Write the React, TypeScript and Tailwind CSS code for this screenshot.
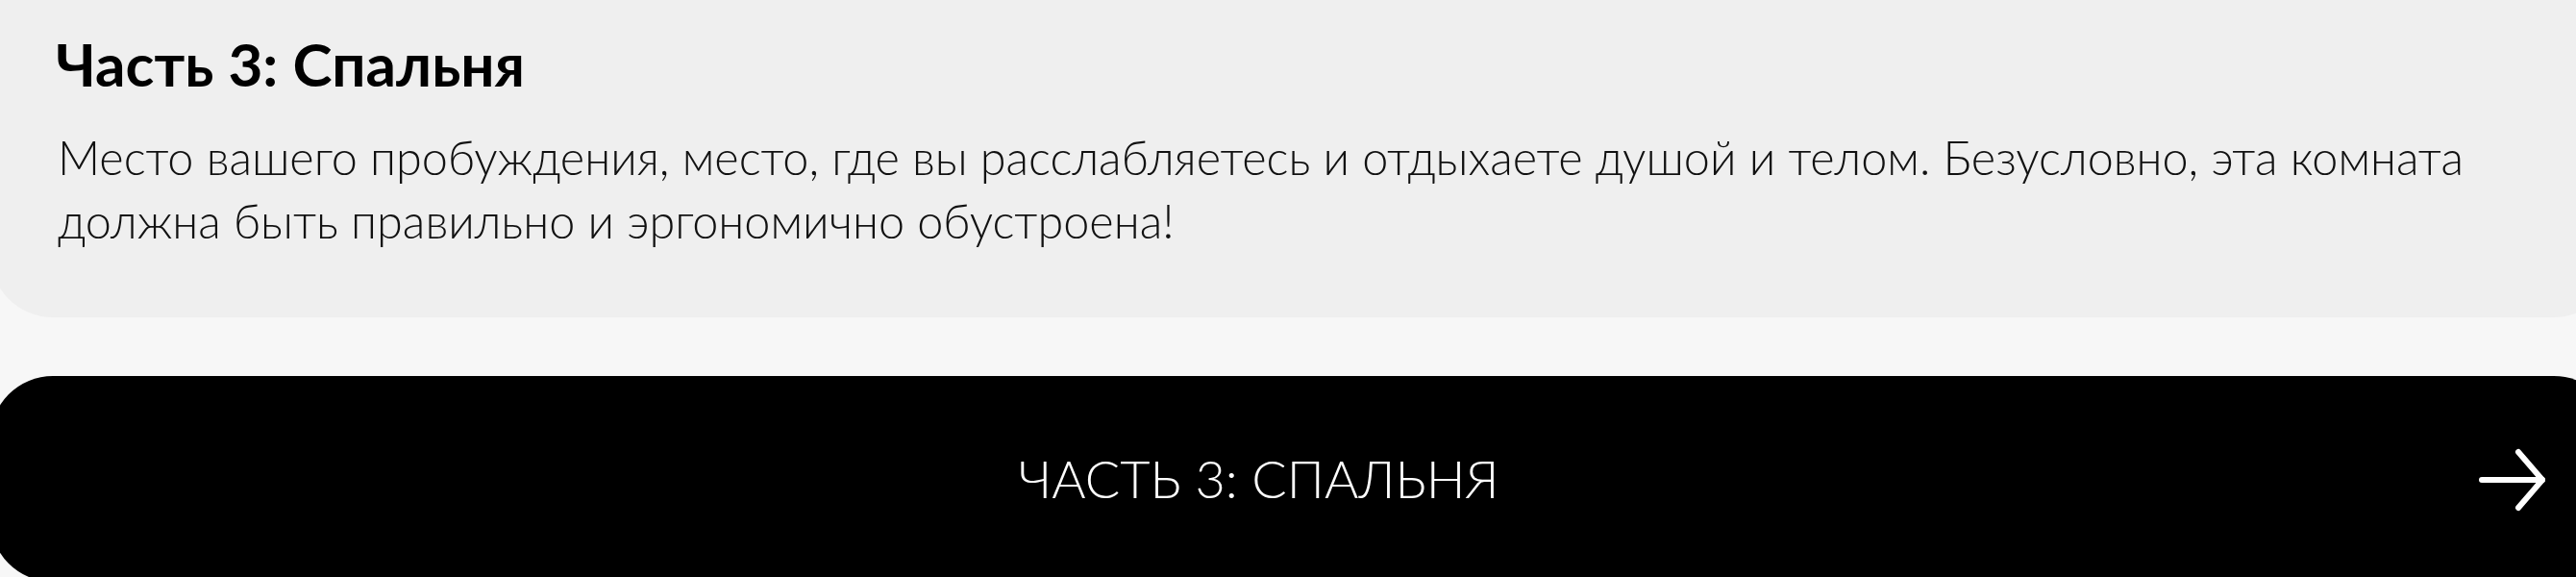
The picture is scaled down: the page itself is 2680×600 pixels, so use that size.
import React from 'react';

// Arrow used on the chapter link button
function ArrowRight() {
  return (
    <svg viewBox="0 0 72 72" className="w-[72px] h-[72px] shrink-0" fill="none" stroke="white" strokeWidth={6} strokeLinecap="round" strokeLinejoin="round">
      <path d="M4 37H67" />
      <path d="M42 8L67 37L42 66" />
    </svg>
  );
}

export default function App() {
  return (
    <main className="w-full h-[600px] overflow-hidden bg-[#f7f7f7] font-['Lato','Liberation_Sans',sans-serif]">
      <div className="-mt-[30px] -ml-[10px] -mr-[42px]">
        <section className="rounded-[65px] bg-[#efefef] pl-[68px] pr-[70px] pt-[65px] pb-[68px]">
          <h2 className="text-[62px] leading-none font-bold text-black">Часть 3: Спальня</h2>
          <p className="mt-[33px] ml-[2px] text-[48.6px] leading-[66px] font-light text-[#111]">
            Место вашего пробуждения, место, где вы расслабляетесь и отдыхаете душой и телом. Безусловно, эта комната должна быть правильно и эргономично обустроена!
          </p>
        </section>

        <button className="mt-[61px] w-full h-[214px] rounded-[65px] bg-black flex items-center pl-[51px] pr-[72px] text-white">
          <span className="flex-1 text-center text-[54px] leading-none font-light uppercase">Часть 3: Спальня</span>
          <ArrowRight />
        </button>
      </div>
    </main>
  );
}
